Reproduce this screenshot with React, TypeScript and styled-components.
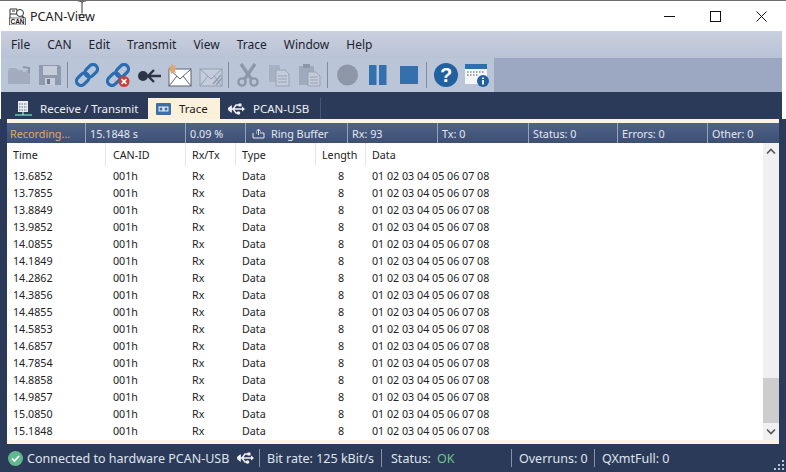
import React from "react";
import styled, { createGlobalStyle } from "styled-components";

const Global = createGlobalStyle`
  html, body { margin: 0; padding: 0; background: #fff; }
  body { font-family: "Noto Sans", "Open Sans", sans-serif; overflow: hidden; }
  * { box-sizing: border-box; }
`;

const Win = styled.div`
  position: relative;
  width: 786px;
  height: 472px;
  display: flex;
  flex-direction: column;
  background: #fff;
  overflow: hidden;
  border-top: 1px solid #6e6e6e;
  padding-left: 1px;
`;
const TitleBar = styled.div`
  height: 30px;
  flex: none;
  display: flex;
  align-items: center;
  padding-left: 8px;
  background: #fff;
  color: #222;
  font-size: 12.6px;
  margin-right: 2px;
`;
const TitleText = styled.span`
  margin-left: 4px;
  flex: 1;
`;
const WinBtn = styled.div`
  width: 46px;
  height: 30px;
  display: flex;
  align-items: center;
  justify-content: center;
`;
const Cursor = styled.svg`
  position: absolute;
  left: 77px;
  top: -1px;
`;
const MenuBar = styled.div`
  height: 27px;
  flex: none;
  margin-right: 4px;
  display: flex;
  align-items: center;
  padding-left: 10px;
  gap: 17px;
  font-size: 12px;
  color: #1d2230;
  background: linear-gradient(#c9d0de, #b9c3d6);
`;
const ToolWrap = styled.div`
  height: 34px;
  flex: none;
  margin-right: 4px;
  background: #9ca8c2;
  display: flex;
`;
const Tools = styled.div`
  width: 493px;
  background: #bbc5d8;
  display: flex;
  align-items: center;
  gap: 7px;
  padding-left: 6px;
`;
const ToolIcon = styled.svg`
  width: 24px;
  height: 24px;
  flex: none;
  display: block;
`;
const ToolSep = styled.div`
  width: 1px;
  height: 26px;
  margin-left: -2px;
  background: #7f8ba3;
`;
const Tabs = styled.div`
  height: 27px;
  flex: none;
  margin-right: 4px;
  background: #2c3a59;
  display: flex;
  align-items: flex-end;
  padding-left: 13px;
`;
const Tab = styled.div<{ $active?: boolean; $w: number }>`
  width: ${(p) => p.$w}px;
  height: 21px;
  display: flex;
  align-items: center;
  gap: 8px;
  padding-left: ${(p) => (p.$active ? 8 : 1)}px;
  font-size: 11.5px;
  color: ${(p) => (p.$active ? "#222" : "#eef1f6")};
  background: ${(p) => (p.$active ? "#fbf0d9" : "transparent")};
`;
const TabSep = styled.div`
  width: 1px;
  height: 21px;
  background: #46557a;
`;
const Body = styled.div`
  flex: 1;
  min-height: 0;
  margin-left: -1px;
  padding: 0 7px;
  background: #2c3a59;
  display: flex;
  flex-direction: column;
`;
const Cream = styled.div<{ $h: number }>`
  height: ${(p) => p.$h}px;
  flex: none;
  background: #fbf3e3;
`;
const StatRow = styled.div`
  height: 20px;
  flex: none;
  display: grid;
  grid-template-columns: 79px 100px 60px 102px 90px 91px 89px 90px 1fr;
  background: linear-gradient(#4f6288, #3d4f75);
  font-size: 10.8px;
  color: #e4e8ef;
`;
const StatCell = styled.div<{ $warm?: boolean }>`
  display: flex;
  align-items: center;
  gap: 6px;
  padding-left: 4px;
  border-right: 1px solid #94a2bd;
  color: ${(p) => (p.$warm ? "#e0a868" : "inherit")};
  &:first-child { padding-left: 3px; }
  &:last-child { border-right: none; }
`;
const Main = styled.div`
  height: 297px;
  flex: none;
  display: flex;
  background: #fff;
`;
const Table = styled.div`
  flex: 1;
  min-width: 0;
  font-size: 10.7px;
  color: #222;
`;
const Columns = "99px 80px 50px 80px 50px 1fr";
const HeadRow = styled.div`
  height: 25px;
  margin-bottom: -1px;
  display: grid;
  grid-template-columns: ${Columns};
  align-items: stretch;
`;
const HeadCell = styled.div<{ $pad: number }>`
  display: flex;
  align-items: center;
  padding-left: ${(p) => p.$pad}px;
  border-right: 1px solid #e6e6e6;
  margin-bottom: 2px;
  &:last-child { border-right: none; }
`;
const DataRow = styled.div`
  height: 17px;
  display: grid;
  grid-template-columns: ${Columns};
  align-items: center;
`;
const Cell = styled.div<{ $pad?: number; $center?: boolean }>`
  padding-left: ${(p) => p.$pad ?? 0}px;
  text-align: ${(p) => (p.$center ? "center" : "left")};
  white-space: nowrap;
`;
const Scroll = styled.div`
  width: 16px;
  flex: none;
  background: #f0f0f0;
  display: flex;
  flex-direction: column;
`;
const ScrollBtn = styled.div`
  height: 17px;
  flex: none;
  display: flex;
  align-items: center;
  justify-content: center;
`;
const ScrollGap = styled.div`
  flex: 1;
`;
const Thumb = styled.div`
  height: 45px;
  flex: none;
  background: #cdcdcd;
`;
const StatusBar = styled.div`
  flex: 1;
  min-height: 0;
  margin: 0 -7px;
  padding-left: 8px;
  display: flex;
  align-items: center;
  font-size: 12.5px;
  color: #dfe4ec;
  position: relative;
`;
const BarText = styled.span<{ $w: number; $ok?: boolean }>`
  width: ${(p) => p.$w}px;
  flex: none;
  white-space: nowrap;
  color: ${(p) => (p.$ok ? "#6fc28c" : "inherit")};
`;
const BarSep = styled.div`
  width: 1px;
  height: 18px;
  flex: none;
  background: #8493ad;
`;
const Grip = styled.svg`
  position: absolute;
  right: 1px;
  bottom: 1px;
`;

const Blue = "#2a6db0";

const Folder = () => (
  <ToolIcon viewBox="0 0 24 24">
    <path d="M1 8l1-3h7l2 2h5v2H1z" fill="#a4aebf" />
    <path d="M1 9h17l5-4v16H1z" fill="#a2acbe" />
    <path d="M16 4l6 1v5" fill="none" stroke="#8d98ab" strokeWidth="2" />
  </ToolIcon>
);
const Save = () => (
  <ToolIcon viewBox="0 0 24 24">
    <path d="M1 2h20l2 2v18H1z" fill="#8f9aae" />
    <rect x="5" y="3" width="14" height="9" fill="#c5cddb" />
    <rect x="7" y="15" width="10" height="7" fill="#c5cddb" />
    <rect x="9" y="16" width="3" height="5" fill="#6f7a8f" />
  </ToolIcon>
);
const Chain = ({ x }: { x?: boolean }) => (
  <ToolIcon viewBox="0 0 24 24">
    <g fill="none" stroke={Blue} strokeWidth="3.2" transform="rotate(-45 12 12)">
      <rect x="-1" y="7.5" width="14" height="9" rx="4.5" />
      <rect x="11" y="7.5" width="14" height="9" rx="4.5" />
    </g>
    {x && (
      <g>
        <circle cx="18" cy="18.5" r="5.5" fill="#c8403a" />
        <path d="M15.6 16.1l4.8 4.8M20.4 16.1l-4.8 4.8" stroke="#fff" strokeWidth="1.6" />
      </g>
    )}
  </ToolIcon>
);
const Plug = () => (
  <ToolIcon viewBox="0 0 24 24">
    <circle cx="6" cy="13" r="5" fill="#2c3546" />
    <path d="M10 13h14M17 7l-6 6 6 6" fill="none" stroke="#2c3546" strokeWidth="2.4" />
  </ToolIcon>
);
const Mail = ({ on }: { on?: boolean }) => (
  <ToolIcon viewBox="0 0 24 24">
    <rect x="1" y="6" width="22" height="17" fill={on ? "#fff" : "#c5cddb"} stroke={on ? "#5c6270" : "#949fb2"} />
    <path d="M1 6l11 10L23 6M1 23l8-10M23 23l-8-10" fill="none" stroke={on ? "#5c6270" : "#949fb2"} />
    {on && <path d="M4 0l1.2 3 3-1-1.2 3 3 1.2-3 1 1 3-3-1.2L3 11 2.400 8l-2.400-1 2.400-1.200L1 2.500l2 .8z" fill="#d9a873" />}
    {!on && <path d="M14 21l8-9M17 22l6-7" stroke="#8f9bb0" strokeWidth="1.5" />}
  </ToolIcon>
);
const Scissors = () => (
  <ToolIcon viewBox="0 0 24 24">
    <path d="M5 1l11 16M19 1L8 17" stroke="#8d98ac" strokeWidth="3.4" fill="none" />
    <circle cx="6" cy="19" r="3.600" fill="none" stroke="#8d98ac" strokeWidth="2.4" />
    <circle cx="18" cy="19" r="3.600" fill="none" stroke="#8d98ac" strokeWidth="2.4" />
  </ToolIcon>
);
const Copy = () => (
  <ToolIcon viewBox="0 0 24 24">
    <path d="M2 2h11v17H2z" fill="#a7b1c3" />
    <path d="M9 7h9l4 4v12H9z" fill="#c3cbd9" stroke="#98a3b6" />
    <path d="M11 13h9M11 16h9M11 19h9" stroke="#98a3b6" />
  </ToolIcon>
);
const Paste = () => (
  <ToolIcon viewBox="0 0 24 24">
    <rect x="1" y="3" width="15" height="19" fill="#a0aabd" />
    <rect x="5" y="1" width="7" height="4" fill="#8c97ab" />
    <path d="M10 9h8l4 4v10H10z" fill="#c3cbd9" stroke="#98a3b6" />
    <path d="M12 14h8M12 17h8M12 20h8" stroke="#98a3b6" />
  </ToolIcon>
);
const Rec = () => (
  <ToolIcon viewBox="0 0 24 24">
    <circle cx="12.500" cy="12" r="10.500" fill="#8e97a8" />
  </ToolIcon>
);
const Pause = () => (
  <ToolIcon viewBox="0 0 24 24">
    <rect x="3" y="2" width="7.500" height="20" fill="#346fae" />
    <rect x="13" y="2" width="7.500" height="20" fill="#346fae" />
  </ToolIcon>
);
const Stop = () => (
  <ToolIcon viewBox="0 0 24 24">
    <rect x="3" y="3" width="18" height="18" fill="#346fae" />
  </ToolIcon>
);
const Help = () => (
  <ToolIcon viewBox="0 0 24 24">
    <circle cx="12" cy="12" r="12" fill="#22619f" />
    <text x="12" y="19" textAnchor="middle" fontSize="20" fontWeight="700" fontFamily="Liberation Sans" fill="#fff">?</text>
  </ToolIcon>
);
const InfoWin = () => (
  <ToolIcon viewBox="0 0 24 24">
    <rect x="0" y="1" width="22" height="20" fill="#f4f6fa" />
    <rect x="0" y="1" width="22" height="5" fill="#2f6fae" />
    <path d="M2 9h18M2 12h12" stroke="#555" strokeDasharray="1.500 1.500" />
    <circle cx="18" cy="18" r="6" fill="#22619f" />
    <path d="M18 17v4.500M18 14.500v1.500" stroke="#fff" strokeWidth="1.800" />
  </ToolIcon>
);

const Usb = ({ w = 17, c = "#f2f4f8" }: { w?: number; c?: string }) => (
  <svg width={w} height={12} viewBox="0 0 17 12" style={{ flex: "none" }}>
    <path d="M0 6l3-2.500v5zM3 6h13M5 6l3-4h3M5 6l3 4h2" fill="none" stroke={c} strokeWidth="1.400" />
    <path d="M0 6l3.500-3v6z" fill={c} />
    <rect x="10.500" y="0.500" width="3" height="3" fill={c} />
    <circle cx="10.500" cy="10" r="1.800" fill={c} />
    <path d="M17 6l-3-2.500v5z" fill={c} />
  </svg>
);

const times = [
  "13.6852", "13.7855", "13.8849", "13.9852", "14.0855", "14.1849", "14.2862", "14.3856",
  "14.4855", "14.5853", "14.6857", "14.7854", "14.8858", "14.9857", "15.0850", "15.1848",
];

export default function App() {
  return (
    <Win>
      <Global />
      <TitleBar>
        <svg width="17" height="17" viewBox="0 0 17 17">
          <path d="M1 1h7v5H1zM1 6v5M3 3h3" fill="none" stroke="#333" />
          <circle cx="11" cy="5" r="3.500" fill="#fff" stroke="#333" />
          <path d="M13 8l3 3" stroke="#333" strokeWidth="1.500" />
          <rect x="0.500" y="10" width="16" height="7" fill="#fff" stroke="#333" strokeWidth="0.700" />
          <text x="8.500" y="16" textAnchor="middle" fontSize="6.500" fontWeight="700" fontFamily="Liberation Sans" fill="#111">CAN</text>
        </svg>
        <TitleText>PCAN-View</TitleText>
        <WinBtn>
          <svg width="11" height="11" viewBox="0 0 11 11"><path d="M0 5.500h11" stroke="#111" /></svg>
        </WinBtn>
        <WinBtn>
          <svg width="11" height="11" viewBox="0 0 11 11"><rect x=".5" y=".5" width="10" height="10" fill="none" stroke="#111" /></svg>
        </WinBtn>
        <WinBtn>
          <svg width="11" height="11" viewBox="0 0 11 11"><path d="M.5.500l10 10M10.500.500l-10 10" stroke="#111" /></svg>
        </WinBtn>
      </TitleBar>
      <Cursor width="10" height="16" viewBox="0 0 10 16">
        <path d="M1 1h2l2 1 2-1h2M5 2v11M1 15h2l2-1 2 1h2" fill="none" stroke="#333" />
      </Cursor>
      <MenuBar>
        <span>File</span><span>CAN</span><span>Edit</span><span>Transmit</span>
        <span>View</span><span>Trace</span><span>Window</span><span>Help</span>
      </MenuBar>
      <ToolWrap>
        <Tools>
          <Folder /><Save /><ToolSep />
          <Chain /><Chain x /><Plug /><Mail on /><Mail /><ToolSep />
          <Scissors /><Copy /><Paste /><ToolSep />
          <Rec /><Pause /><Stop /><ToolSep />
          <Help /><InfoWin />
        </Tools>
      </ToolWrap>
      <Tabs>
        <Tab $w={134}>
          <svg width="17" height="16" viewBox="0 0 17 16">
            <rect x="3" y="0" width="10" height="11" fill="#e9edf3" />
            <path d="M4 3h8M4 6h8M4 9h8" stroke="#5a6684" strokeDasharray="1.500 1" />
            <path d="M0 14h17" stroke="#4fa7a3" strokeWidth="2" />
            <path d="M8 11v3" stroke="#e9edf3" />
          </svg>
          <span>Receive / Transmit</span>
        </Tab>
        <Tab $active $w={72}>
          <svg width="15" height="12" viewBox="0 0 15 12">
            <rect width="15" height="12" rx="1" fill="#3c6fa8" />
            <rect x="2.500" y="3.500" width="10" height="5" fill="#dde6f0" />
            <circle cx="5" cy="6" r="1.500" fill="#3c6fa8" />
            <circle cx="10" cy="6" r="1.500" fill="#3c6fa8" />
          </svg>
          <span>Trace</span>
        </Tab>
        <Tab $w={100} style={{ paddingLeft: 8 }}>
          <Usb />
          <span>PCAN-USB</span>
        </Tab>
        <TabSep />
      </Tabs>
      <Body>
        <Cream $h={4} />
        <StatRow>
          <StatCell $warm>Recording...</StatCell>
          <StatCell>15.1848 s</StatCell>
          <StatCell>0.09 %</StatCell>
          <StatCell>
            <svg width="13" height="11" viewBox="0 0 13 11" style={{ marginLeft: 2 }}>
              <path d="M1 5v5h11V5H8M5 5H4" fill="none" stroke="#e4e8ef" />
              <path d="M6.500 7V2M4.500 3.500l2-2.500 2 2.500" fill="none" stroke="#e4e8ef" />
            </svg>
            <span>Ring Buffer</span>
          </StatCell>
          <StatCell>Rx: 93</StatCell>
          <StatCell>Tx: 0</StatCell>
          <StatCell>Status: 0</StatCell>
          <StatCell>Errors: 0</StatCell>
          <StatCell>Other: 0</StatCell>
        </StatRow>
        <Main>
          <Table>
            <HeadRow>
              <HeadCell $pad={6}>Time</HeadCell>
              <HeadCell $pad={7}>CAN-ID</HeadCell>
              <HeadCell $pad={6}>Rx/Tx</HeadCell>
              <HeadCell $pad={6}>Type</HeadCell>
              <HeadCell $pad={6}>Length</HeadCell>
              <HeadCell $pad={6}>Data</HeadCell>
            </HeadRow>
            {times.map((t) => (
              <DataRow key={t}>
                <Cell $pad={6}>{t}</Cell>
                <Cell $pad={7}>001h</Cell>
                <Cell $pad={6}>Rx</Cell>
                <Cell $pad={6}>Data</Cell>
                <Cell $center>8</Cell>
                <Cell $pad={6}>01 02 03 04 05 06 07 08</Cell>
              </DataRow>
            ))}
          </Table>
          <Scroll>
            <ScrollBtn>
              <svg width="10" height="7" viewBox="0 0 10 7"><path d="M1 5.500l4-4 4 4" fill="none" stroke="#555" strokeWidth="1.600" /></svg>
            </ScrollBtn>
            <ScrollGap />
            <Thumb />
            <ScrollBtn>
              <svg width="10" height="7" viewBox="0 0 10 7"><path d="M1 1.500l4 4 4-4" fill="none" stroke="#555" strokeWidth="1.600" /></svg>
            </ScrollBtn>
          </Scroll>
        </Main>
        <Cream $h={4} />
        <StatusBar>
          <svg width="15" height="15" viewBox="0 0 15 15" style={{ flex: "none", marginRight: 4 }}>
            <circle cx="7.500" cy="7.500" r="7.500" fill="#5fb98c" />
            <path d="M4 7.500l2.500 2.500 4.500-5" fill="none" stroke="#fff" strokeWidth="1.800" />
          </svg>
          <BarText $w={210}>Connected to hardware PCAN-USB</BarText>
          <Usb />
          <BarSep style={{ marginLeft: 5, marginRight: 7 }} />
          <BarText $w={114}>Bit rate: 125 kBit/s</BarText>
          <BarSep style={{ marginRight: 9 }} />
          <BarText $w={46}>Status:</BarText>
          <BarText $w={74} $ok>OK</BarText>
          <BarSep style={{ marginRight: 7 }} />
          <BarText $w={75}>Overruns: 0</BarText>
          <BarSep style={{ marginRight: 7 }} />
          <BarText $w={80}>QXmtFull: 0</BarText>
          <Grip width="12" height="12" viewBox="0 0 12 12">
            <path d="M9 1h2v2H9zM5 5h2v2H5zM9 5h2v2H9zM1 9h2v2H1zM5 9h2v2H5zM9 9h2v2H9z" fill="#b9c3d6" />
          </Grip>
        </StatusBar>
      </Body>
    </Win>
  );
}
